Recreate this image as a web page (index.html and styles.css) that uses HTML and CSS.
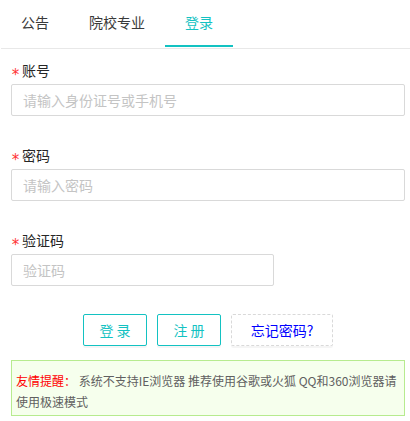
FILE: index.html
```html
<!DOCTYPE html>
<html lang="zh-CN">
<head>
<meta charset="utf-8">
<title>登录</title>
<link rel="stylesheet" href="styles.css">
</head>
<body>
<div class="tabs">
  <div class="tab">公告</div>
  <div class="tab">院校专业</div>
  <div class="tab active">登录</div>
</div>
<form class="form">
  <div class="item">
    <label class="label required">账号</label>
    <input class="input" type="text" placeholder="请输入身份证号或手机号">
  </div>
  <div class="item">
    <label class="label required">密码</label>
    <input class="input" type="password" placeholder="请输入密码">
  </div>
  <div class="item">
    <label class="label required">验证码</label>
    <input class="input input-short" type="text" placeholder="验证码">
  </div>
  <div class="actions">
    <button type="button" class="btn btn-primary">登 录</button>
    <button type="button" class="btn btn-primary">注 册</button>
    <button type="button" class="btn btn-dashed">忘记密码?</button>
  </div>
  <div class="notice"><span class="notice-title">友情提醒：</span> 系统不支持IE浏览器 推荐使用谷歌或火狐 QQ和360浏览器请<br>使用极速模式</div>
</form>
</body>
</html>
```

FILE: styles.css
```css
* {
  box-sizing: border-box;
}

body {
  margin: 0;
  background: #fff;
  font-family: "Noto Sans CJK SC", "Noto Sans", sans-serif;
  font-size: 14px;
  color: #333;
}

.tabs {
  display: flex;
  margin-left: 1px;
  padding-bottom: 1px;
  border-bottom: 1px solid #e8e8e8;
}

.tab {
  padding: 0 20px;
  height: 47px;
  line-height: 45px;
  font-size: 14px;
  color: #3a3a3a;
  border-bottom: 2px solid transparent;
  cursor: pointer;
}

.tab.active {
  color: #13c2c2;
  border-bottom-color: #13c2c2;
}

.form {
  margin: 0 0 0 11px;
  width: 394px;
  padding-top: 10px;
}

.item {
  display: flex;
  flex-direction: column;
  align-items: flex-start;
  margin-bottom: 28px;
}

.label {
  display: block;
  height: 22px;
  line-height: 22px;
  margin-bottom: 3px;
  font-size: 14px;
  color: #262626;
}

.label.required::before {
  content: "*";
  display: inline-block;
  margin-right: 3px;
  color: #ff3333;
  font-family: "DejaVu Sans Mono", monospace;
  font-size: 15px;
  vertical-align: -4px;
  line-height: 1;
  width: 8px;
}

.input {
  display: block;
  width: 394px;
  height: 32px;
  padding: 4px 11px;
  border: 1px solid #d9d9d9;
  border-radius: 2px;
  font-family: inherit;
  font-size: 14px;
  color: #333;
  background: #fff;
  outline: none;
}

.input::placeholder {
  color: #c4c4c4;
}

.input-short {
  width: 263px;
}

.actions {
  display: flex;
  justify-content: center;
  gap: 10px;
  margin-bottom: 14px;
}

.btn {
  height: 32px;
  padding: 0;
  border-radius: 2px;
  font-family: inherit;
  font-size: 14px;
  line-height: 30px;
  background: #fff;
  cursor: pointer;
  box-shadow: 0 2px 0 rgba(0, 0, 0, 0.04);
}

.btn-primary {
  width: 64px;
  border: 1px solid #13c2c2;
  color: #13c2c2;
}

.btn-dashed {
  width: 102px;
  border: 1px dashed #d9d9d9;
  color: #0000ff;
}

.notice {
  height: 56px;
  padding: 9px 3px 3px 4px;
  border: 1px solid #b7eb8f;
  background: #f6ffed;
  font-size: 12px;
  line-height: 21px;
  color: #606060;
  white-space: nowrap;
}

.notice-title {
  color: #ff0000;
}
```
